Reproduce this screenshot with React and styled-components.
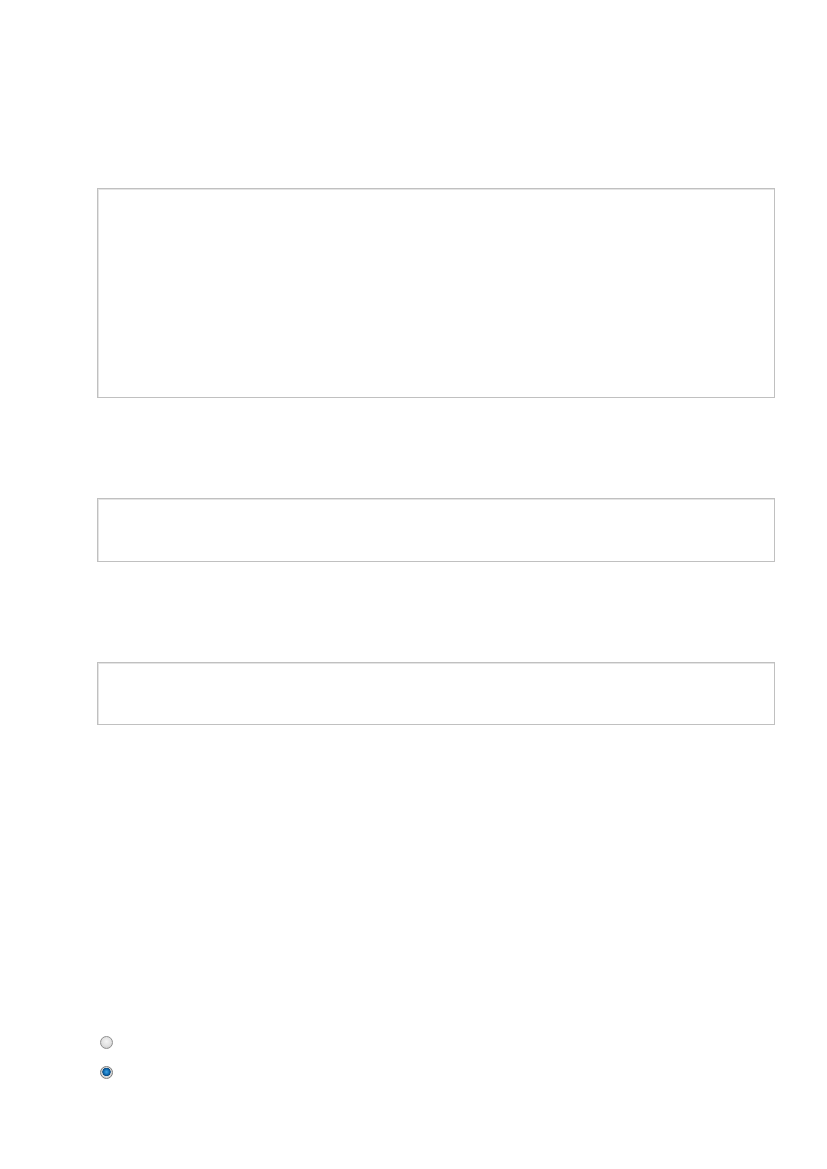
import React from "react";
import styled, { createGlobalStyle } from "styled-components";

const GlobalStyle = createGlobalStyle`
  body {
    margin: 0;
    background: #ffffff;
    font-family: "Liberation Sans", Arial, sans-serif;
  }
`;

const App = () => {
  return (
    <>
      <GlobalStyle />
      <Page>
        <Form>
          <Field>
            <TextArea name="message" />
          </Field>
          <Field>
            <TextInput name="first" type="text" $height={64} />
          </Field>
          <Field>
            <TextInput name="second" type="text" $height={63} />
          </Field>
          <Choices>
            <Choice>
              <Radio type="radio" name="option" value="a" />
            </Choice>
            <Choice>
              <Radio type="radio" name="option" value="b" defaultChecked />
            </Choice>
          </Choices>
        </Form>
      </Page>
    </>
  );
};

const Page = styled.div`
  width: 827px;
  min-height: 1169px;
  padding: 188px 0 0 97px;
  box-sizing: border-box;
`;

const Form = styled.form`
  width: 678px;
  display: flex;
  flex-direction: column;
  gap: 100px;
`;

const Field = styled.div`
  display: flex;
`;

const boxStyle = `
  width: 100%;
  box-sizing: border-box;
  border: 1px solid #c0c0c0;
  box-shadow: inset 1px 1px 0 #e4e4e4;
  background: #ffffff;
  outline: none;
  margin: 0;
  padding: 6px 8px;
  font: 14px "Liberation Sans", Arial, sans-serif;
`;

const TextArea = styled.textarea`
  ${boxStyle}
  height: 210px;
  resize: none;
`;

const TextInput = styled.input`
  ${boxStyle}
  height: ${(p) => p.$height}px;
`;

const Choices = styled.div`
  display: flex;
  flex-direction: column;
  gap: 18px;
  margin-top: 211px;
`;

const Choice = styled.label`
  display: flex;
  align-items: center;
  height: 12px;
  padding-left: 3px;
`;

const Radio = styled.input`
  appearance: none;
  margin: 0;
  width: 13px;
  height: 13px;
  border-radius: 50%;
  border: 1px solid #8e8e8e;
  box-sizing: border-box;
  background: radial-gradient(circle at 50% 40%, #f4f4f4 0%, #e0e0e0 55%, #bdbdbd 100%);

  &:checked {
    border-color: #7c7c7c;
    background:
      radial-gradient(circle at 50% 45%, #3fa3e6 0%, #0f6db4 32%, #0a4a80 48%, transparent 54%),
      radial-gradient(circle, #f2f2f2 0%, #d4d4d4 70%, #b0b0b0 100%);
  }
`;

export default App;
